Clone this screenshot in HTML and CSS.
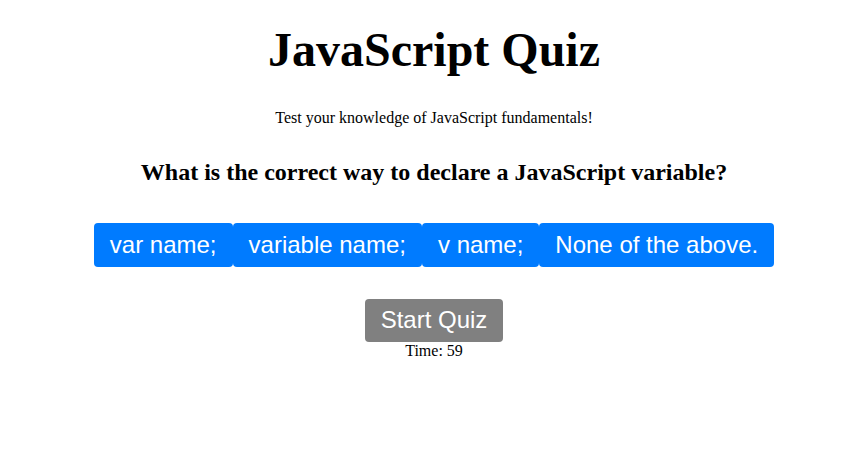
FILE: index.html
```html
<!DOCTYPE html>
<html>
<head>
<meta charset="utf-8">
<link rel="stylesheet" href="styles.css">
</head>
<body>
<div class="quiz">
  <h1 class="title">JavaScript Quiz</h1>
  <p class="subtitle">Test your knowledge of JavaScript fundamentals!</p>
  <h2 class="question">What is the correct way to declare a JavaScript variable?</h2>
  <div class="options">
    <button class="option">var name;</button>
    <button class="option">variable name;</button>
    <button class="option">v name;</button>
    <button class="option">None of the above.</button>
  </div>
  <button class="start">Start Quiz</button>
  <div class="timer">Time: 59</div>
</div>
</body>
</html>
```

FILE: styles.css
```css
html, body {
  margin: 0;
  padding: 0;
  background: #fff;
}
body {
  font-family: "Liberation Serif", "Times New Roman", serif;
  color: #000;
}
.quiz {
  display: flex;
  flex-direction: column;
  align-items: center;
  text-align: center;
  padding-top: 22px;
  padding-left: 14px;
}
.title {
  font-size: 48px;
  font-weight: bold;
  margin: 0;
  line-height: 55px;
}
.subtitle {
  font-size: 16px;
  margin: 32px 0 0;
  line-height: 18px;
}
.question {
  font-size: 24px;
  font-weight: bold;
  margin: 31px 0 0;
  line-height: 28px;
}
.options {
  display: flex;
  margin-top: 37px;
}
.option, .start {
  font-family: "Liberation Sans", Arial, sans-serif;
  font-size: 24px;
  line-height: 28px;
  color: #fff;
  border: none;
  border-radius: 4px;
  padding: 8px 16px;
  margin: 0;
  cursor: pointer;
}
.option {
  background: #007bff;
}
.start {
  background: #808080;
  margin-top: 32px;
  padding: 7px 16px 8px;
}
.timer {
  font-size: 16px;
  line-height: 18px;
}
```
